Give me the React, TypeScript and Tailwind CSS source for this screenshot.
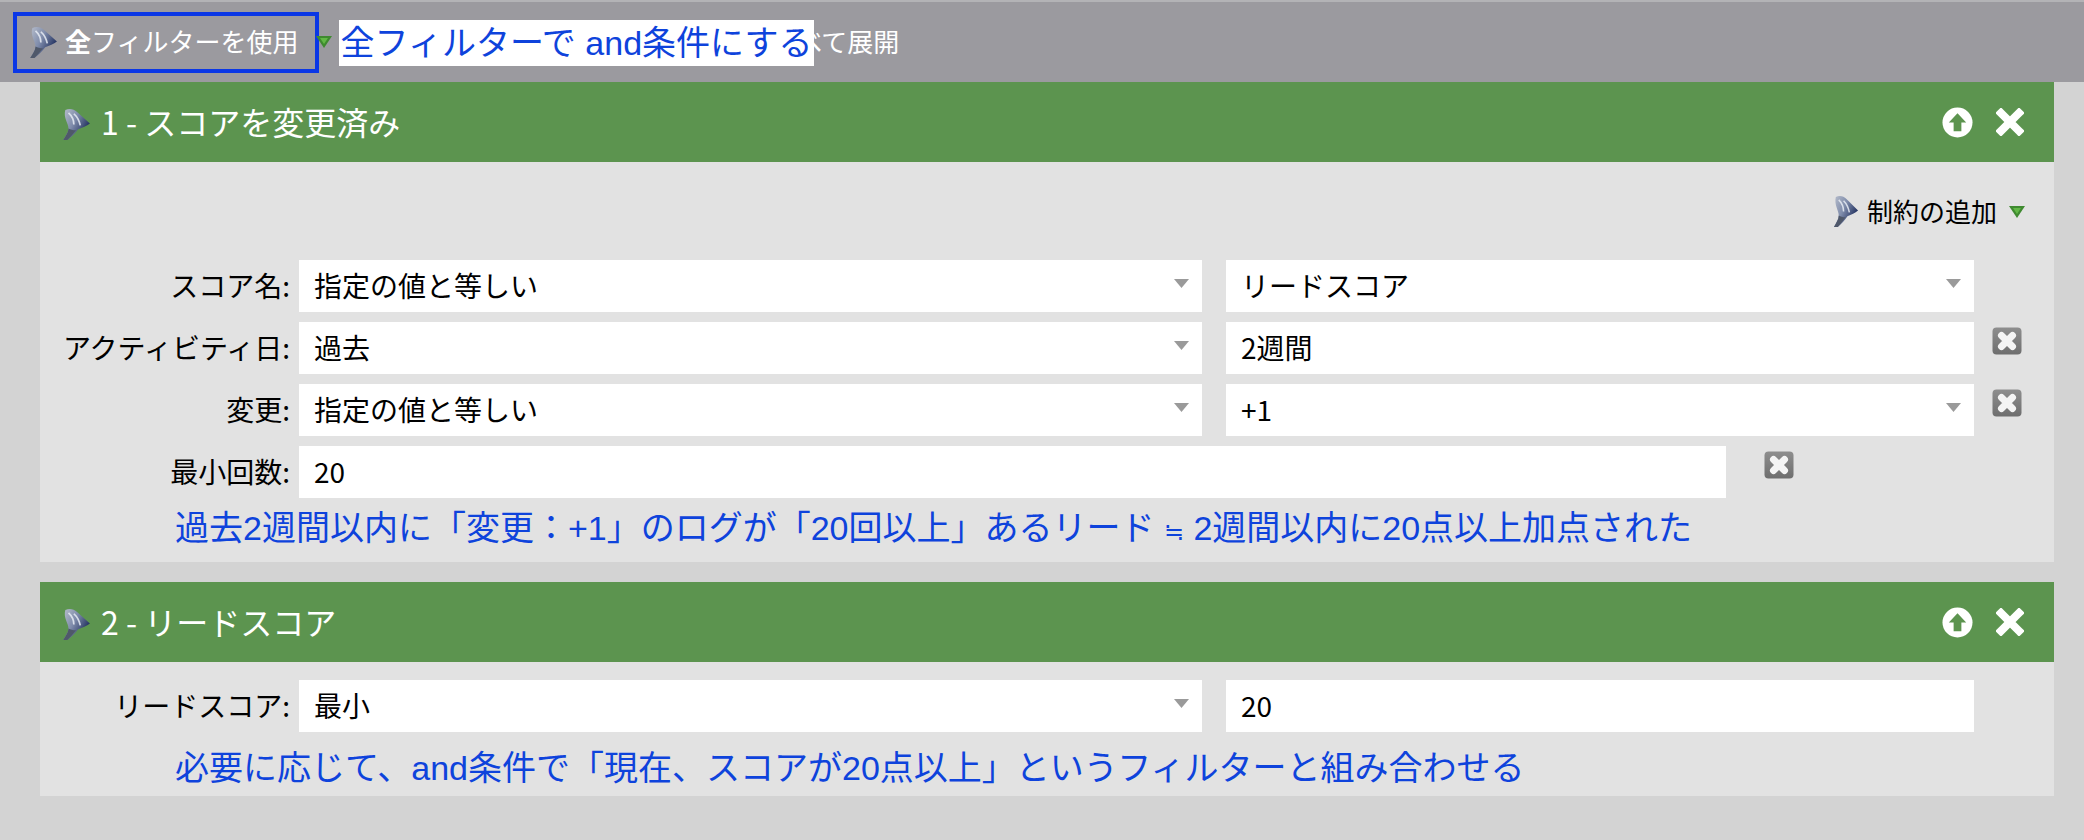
import { useId, type ReactNode } from 'react';

const SANS = "font-['Noto_Sans_CJK_JP',sans-serif]";
const NOTE = "font-['Liberation_Sans','Noto_Sans_CJK_JP',sans-serif]";

function FunnelIcon({ className }: { className?: string }) {
  const id = useId();
  return (
    <svg viewBox="0 0 28 34" preserveAspectRatio="none" className={className}>
      <defs>
        <linearGradient id={id} x1="0.1" y1="0.1" x2="0.9" y2="0.6">
          <stop offset="0" stopColor="#aab2c4" />
          <stop offset="0.45" stopColor="#7f8cab" />
          <stop offset="1" stopColor="#263563" />
        </linearGradient>
      </defs>
      <path d="M4 2 C8 0 12 1 15 4 L27 16 C24 19 20 20 16 22 C13 26 10 30 6 33 L2 33 C4 29 7 25 7 21 C7 16 2 10 4 2 Z" fill={`url(#${id})`} />
      <path d="M7 5 C10 8 12 12 12 17 M12 6 C15 9 17 13 18 18" stroke="#e8ecf4" strokeWidth="1.6" fill="none" opacity="0.85" />
      <path d="M7 21 C9 22 11 23 14 23 C11 27 9 30 6 33 L2 33 C4 29 7 25 7 21 Z" fill="#4f586a" />
    </svg>
  );
}

function GreenCaret({ className }: { className?: string }) {
  return (
    <svg viewBox="0 0 16 14" className={className}>
      <path d="M0 1 H16 L8 13 Z" fill="#3f8a30" />
      <path d="M4 3 H12 L8 9 Z" fill="#62b846" />
    </svg>
  );
}

function UpCircle() {
  return (
    <svg viewBox="0 0 32 32" className="w-[31px] h-[31px]">
      <circle cx="16" cy="16" r="15.5" fill="#fff" />
      <path d="M16 6.5 L25 16 H20 V25 H12 V16 H7 Z" fill="#5c944f" />
    </svg>
  );
}

function CloseX() {
  return (
    <svg viewBox="0 0 28 28" className="w-7 h-7">
      <path d="M5 5 L23 23 M23 5 L5 23" stroke="#fff" strokeWidth="8" strokeLinecap="square" />
    </svg>
  );
}

function DeleteButton() {
  const id = useId();
  return (
    <svg viewBox="0 0 30 28" className="w-[30px] h-7 shrink-0 mt-[5px]">
      <defs>
        <linearGradient id={id} x1="0" y1="0" x2="0" y2="1">
          <stop offset="0" stopColor="#8e8e8e" />
          <stop offset="1" stopColor="#6e6e6e" />
        </linearGradient>
      </defs>
      <rect x="0.5" y="0.5" width="29" height="27" rx="4" fill={`url(#${id})`} />
      <path d="M9.5 8.5 L20.5 19.5 M20.5 8.5 L9.5 19.5" stroke="#f4f4f4" strokeWidth="7" strokeLinecap="round" />
    </svg>
  );
}

function Field({ value, width, arrow = true }: { value: string; width: string; arrow?: boolean }) {
  return (
    <div className={`${width} h-[52px] bg-white shrink-0 flex items-center justify-between pb-[2px] pl-[15px] pr-[13px] text-[28px] text-black`}>
      <span>{value}</span>
      {arrow && (
        <svg viewBox="0 0 15 9" className="w-[15px] h-[9px] mb-1">
          <path d="M0 0 H15 L7.5 9 Z" fill="#9a9a9a" />
        </svg>
      )}
    </div>
  );
}

function Row({ label, children }: { label: string; children: ReactNode }) {
  return (
    <div className="flex items-start">
      <div className="w-[259px] h-[52px] shrink-0 flex items-center justify-end pb-[2px] pr-[9px] text-[28px] text-black whitespace-nowrap">
        {label}
      </div>
      {children}
    </div>
  );
}

function PanelHeader({ title }: { title: string }) {
  return (
    <div className="h-20 bg-[#5c944f] flex items-center justify-between pl-[21px] pr-[30px]">
      <div className="flex items-center gap-[10px] text-[32px] text-white">
        <FunnelIcon className="w-[30px] h-[33px] shrink-0 mt-1" />
        <span className="pb-[2px]">{title}</span>
      </div>
      <div className="flex items-center gap-[23px]">
        <UpCircle />
        <CloseX />
      </div>
    </div>
  );
}

function Note({ children }: { children: ReactNode }) {
  return <div className={`${NOTE} text-[34px] leading-none text-[#0e43dc] pl-[135px] whitespace-nowrap`}>{children}</div>;
}

export default function App() {
  return (
    <div className={`${SANS} w-[2084px] h-[840px] bg-[#d3d3d3] overflow-hidden`}>
      {/* Top toolbar */}
      <div className="relative h-[82px] bg-[#9b9a9f] border-t-2 border-[#b3b3b6] flex items-center pl-[13px]">
        <div className="w-[306px] h-[61px] border-[4px] border-[#0a37e6] flex items-center pl-[11px] gap-[5px] text-[26px] text-white whitespace-nowrap">
          <FunnelIcon className="w-[30px] h-[33px] shrink-0" />
          <span className="pb-[3px] pl-[2px]">
            <b className="font-bold">全</b>フィルターを使用
          </span>
        </div>
        <GreenCaret className="w-4 h-3.5 ml-[-3px]" />
        <span className="absolute left-[772px] top-[19px] text-[26px] text-white whitespace-nowrap">すべて展開</span>
        <div className={`${NOTE} absolute left-[339px] top-[18px] w-[475px] h-[46px] bg-white flex items-center justify-center text-[34px] text-[#0e43dc] whitespace-nowrap`}>
          全フィルターで and条件にする
        </div>
      </div>

      <div className="pl-10 pr-[30px]">
        {/* Panel 1 */}
        <div className="bg-[#e2e2e2] h-[480px]">
          <PanelHeader title="1 - スコアを変更済み" />
          <div className="h-[98px] flex items-start justify-end pt-[29px] pr-[29px] text-[26px] text-black">
            <div className="flex items-center">
              <FunnelIcon className="w-[27px] h-[33px]" />
              <span className="ml-2 pb-[2px]">制約の追加</span>
              <GreenCaret className="w-[16px] h-[14px] ml-[12px]" />
            </div>
          </div>
          <div className="flex flex-col gap-[10px]">
            <Row label="スコア名:">
              <Field value="指定の値と等しい" width="w-[903px]" />
              <div className="w-6 shrink-0" />
              <Field value="リードスコア" width="w-[748px]" />
            </Row>
            <Row label="アクティビティ日:">
              <Field value="過去" width="w-[903px]" />
              <div className="w-6 shrink-0" />
              <Field value="2週間" width="w-[748px]" arrow={false} />
              <div className="ml-[18px]"><DeleteButton /></div>
            </Row>
            <Row label="変更:">
              <Field value="指定の値と等しい" width="w-[903px]" />
              <div className="w-6 shrink-0" />
              <Field value="+1" width="w-[748px]" />
              <div className="ml-[18px]"><DeleteButton /></div>
            </Row>
            <Row label="最小回数:">
              <Field value="20" width="w-[1427px]" arrow={false} />
              <div className="ml-[38px]"><DeleteButton /></div>
            </Row>
          </div>
          <div className="mt-[13px]">
            <Note>
              過去2週間以内に「変更：+1」のログが「20回以上」あるリード <span className="text-[24px]">≒</span> 2週間以内に20点以上加点された
            </Note>
          </div>
        </div>

        {/* Panel 2 */}
        <div className="bg-[#e2e2e2] h-[214px] mt-5">
          <PanelHeader title="2 - リードスコア" />
          <div className="pt-[18px]">
            <Row label="リードスコア:">
              <Field value="最小" width="w-[903px]" />
              <div className="w-6 shrink-0" />
              <Field value="20" width="w-[748px]" arrow={false} />
            </Row>
          </div>
          <div className="mt-[19px]">
            <Note>必要に応じて、and条件で「現在、スコアが20点以上」というフィルターと組み合わせる</Note>
          </div>
        </div>
      </div>
    </div>
  );
}
